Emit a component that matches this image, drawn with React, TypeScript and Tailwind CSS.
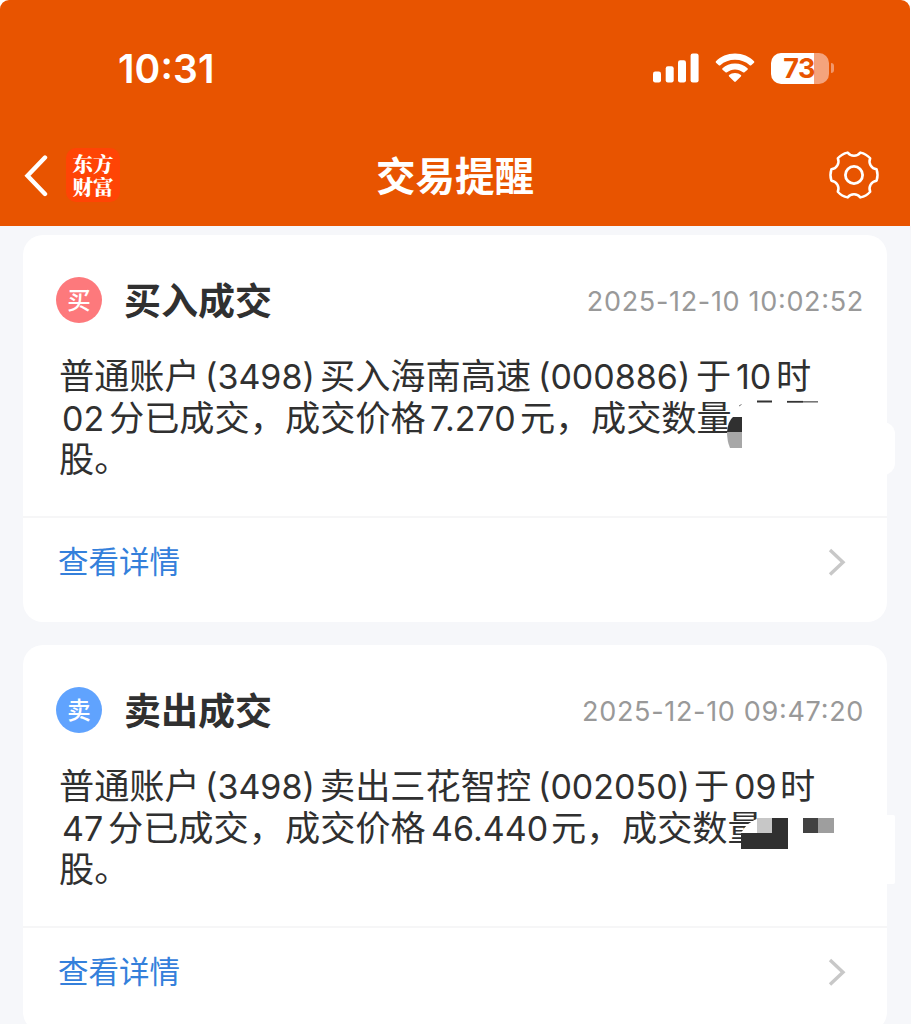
import React from 'react';

type Segment = { text: string; cls: string; latin?: boolean };

type Notice = {
  badge: string;
  badgeColor: string;
  title: string;
  time: string;
  lines: Segment[][];
  cover: React.ReactNode;
};

const CJK = "font-['Noto_Sans_CJK_SC',sans-serif]";
const LATIN = "font-['Inter',sans-serif]";

const notices: Notice[] = [
  {
    badge: '买',
    badgeColor: 'bg-[#fd797c]',
    title: '买入成交',
    time: '2025-12-10 10:02:52',
    lines: [
      [
        { text: '普通账户', cls: 'w-[146px]' },
        { text: '(3498)', cls: 'w-[115px]', latin: true },
        { text: '买入海南高速', cls: 'w-[218px]' },
        { text: '(000886)', cls: 'w-[158px]', latin: true },
        { text: '于', cls: 'w-[40px]' },
        { text: '10', cls: 'w-[40px]', latin: true },
        { text: '时', cls: '' },
      ],
      [
        { text: '02', cls: 'w-[47px] ml-[3px]', latin: true },
        { text: '分已成交，', cls: 'w-[176px]' },
        { text: '成交价格', cls: 'w-[145px]' },
        { text: '7.270', cls: 'w-[90px]', latin: true },
        { text: '元，', cls: 'w-[71px]' },
        { text: '成交数量', cls: '' },
      ],
      [{ text: '股。', cls: '' }],
    ],
    cover: (
      <>
        <div className="absolute left-[840px] top-[187px] h-[53px] w-[32px] rounded-r-[12px] bg-white" />
        <svg className="absolute left-[700px] top-[160px]" width="110" height="60">
          <path d="M4 54 Q4 24 18 8 L110 8 V60 H6Z" fill="#fff" />
          <path d="M10 22 H19 V37 H4 Q5 26 10 22Z" fill="#303030" />
          <path d="M4 37 H19 V53 H7 Q4 46 4 37Z" fill="#a7a7a7" />
          <path d="M16 11 L18.5 9.5" stroke="#777" strokeWidth="1" />
          <path d="M34 6.5 H49" stroke="#333" strokeWidth="2" />
          <path d="M64 6.8 H80" stroke="#333" strokeWidth="1.8" />
          <path d="M80 6.8 H95" stroke="#777" strokeWidth="1.6" />
        </svg>
      </>
    ),
  },
  {
    badge: '卖',
    badgeColor: 'bg-[#60a3fe]',
    title: '卖出成交',
    time: '2025-12-10 09:47:20',
    lines: [
      [
        { text: '普通账户', cls: 'w-[146px]' },
        { text: '(3498)', cls: 'w-[115px]', latin: true },
        { text: '卖出三花智控', cls: 'w-[218px]' },
        { text: '(002050)', cls: 'w-[156px]', latin: true },
        { text: '于', cls: 'w-[40px]' },
        { text: '09', cls: 'w-[46px]', latin: true },
        { text: '时', cls: '' },
      ],
      [
        { text: '47', cls: 'w-[46px] ml-[3px]', latin: true },
        { text: '分已成交，', cls: 'w-[177px]' },
        { text: '成交价格', cls: 'w-[146px]' },
        { text: '46.440', cls: 'w-[120px]', latin: true },
        { text: '元，', cls: 'w-[71px]' },
        { text: '成交数量', cls: '' },
      ],
      [{ text: '股。', cls: '' }],
    ],
    cover: (
      <>
        <div className="absolute left-[840px] top-[170px] h-[69px] w-[32px] rounded-r-[2px] bg-white" />
        <svg className="absolute left-[700px] top-[160px]" width="120" height="60">
          <path d="M18 45 V28 Q24 17 36 13 H112 V45Z" fill="#fff" />
          <path d="M34 13 H49 V28 H34Z" fill="#c7c7c7" />
          <path d="M49 13 H65 V44 H18 V28 H49Z" fill="#303030" />
          <path d="M80 13 H95 V28 H80Z" fill="#424242" />
          <path d="M95 13 H111 V28 H95Z" fill="#9e9e9e" />
        </svg>
      </>
    ),
  },
];

function gearPath(): string {
  const point = (deg: number) => {
    const a = (deg * Math.PI) / 180;
    return `${(26 + 23.3 * Math.cos(a)).toFixed(2)} ${(26 + 23.3 * Math.sin(a)).toFixed(2)}`;
  };
  let d = `M${point(-14)}`;
  for (let i = 0; i < 6; i++) {
    d += ` A18 18 0 0 1 ${point(i * 60 + 14)} A8 8 0 0 0 ${point(i * 60 + 46)}`;
  }
  return d + 'Z';
}

// Clock text with the colons lifted to the middle of the digits.
function ClockText({ value }: { value: string }) {
  return (
    <>
      {value.split(/(:)/).map((part, i) =>
        part === ':' ? (
          <span key={i} className="relative -top-[0.08em]">
            :
          </span>
        ) : (
          part
        ),
      )}
    </>
  );
}

function StatusBar() {
  return (
    <div className="flex h-[136px] items-center pl-[118px] pr-[76px] text-white">
      <span className={`${LATIN} text-[39px] font-semibold leading-none tracking-[0.1px]`}>
        <ClockText value="10:31" />
      </span>
      <svg className="ml-auto" width="46" height="30" fill="#fff">
        <rect x="0" y="18.5" width="8" height="11" rx="2.2" />
        <rect x="12.7" y="13.3" width="8" height="16.2" rx="2.2" />
        <rect x="25" y="7.3" width="8" height="22.2" rx="2.2" />
        <rect x="37.6" y="0.6" width="8" height="28.9" rx="2.2" />
      </svg>
      <svg className="ml-[16px]" width="40" height="30" viewBox="0 0 40 30" fill="#fff">
        <path d="M20 0.5 C27.5 0.5 34.5 3.5 39 8.2 C39.5 8.7 39.5 9.2 39 9.7 L36.2 12.2 C35.8 12.6 35.2 12.6 34.7 12.2 C30.8 8.7 25.6 6.8 20 6.8 C14.4 6.8 9.2 8.7 5.3 12.2 C4.8 12.6 4.2 12.6 3.8 12.2 L1 9.7 C0.5 9.2 0.5 8.7 1 8.2 C5.5 3.5 12.5 0.5 20 0.5Z" />
        <path d="M20 10.4 C24.9 10.4 29.3 12.2 32.5 15.2 C33 15.7 33 16.2 32.5 16.7 L29.5 19.3 C29.1 19.7 28.5 19.7 28 19.3 C25.7 17.4 23 16.4 20 16.4 C17 16.4 14.3 17.4 12 19.3 C11.5 19.7 10.9 19.7 10.5 19.3 L7.5 16.7 C7 16.2 7 15.7 7.5 15.2 C10.7 12.2 15.1 10.4 20 10.4Z" />
        <path d="M20 20 C22.4 20 24.3 20.8 25.9 22.1 C26.4 22.5 26.4 23 25.9 23.5 L20.8 28.6 C20.3 29.1 19.7 29.1 19.2 28.6 L14.1 23.5 C13.6 23 13.6 22.5 14.1 22.1 C15.7 20.8 17.6 20 20 20Z" />
      </svg>
      <div className="ml-[16px] flex items-center">
        <div className="flex h-[31px] w-[58px] items-center justify-center overflow-hidden rounded-[10px] bg-[linear-gradient(to_right,#fff_43px,#f4a37c_43px)]">
          <span className={`${LATIN} mr-[2px] text-[27px] font-bold leading-none tracking-[-0.7px] text-[#e85400]`}>73</span>
        </div>
        <div className="ml-[2px] h-[10px] w-[3px] rounded-r-full bg-[#f2976a]" />
      </div>
    </div>
  );
}

function NavBar() {
  return (
    <div className="flex h-[77px] items-center pl-[23px] pr-[30px] text-white">
      <svg width="27" height="44" fill="none" stroke="#fff" strokeWidth="4.4" strokeLinecap="round">
        <path d="M22 4.5 L4.5 22.8 L22 41" />
      </svg>
      <div className="ml-[16px] flex h-[54px] w-[54px] flex-col items-center justify-center rounded-[10px] bg-[#ff4405] font-['Noto_Serif_CJK_SC','Noto_Sans_CJK_SC',serif] text-[20.5px] font-black leading-[23px]">
        <span>东方</span>
        <span>财富</span>
      </div>
      <h1 className={`${CJK} -mt-[2px] ml-[256px] text-[39.5px] font-bold leading-none`}>交易提醒</h1>
      <svg className="ml-auto" width="52" height="52" fill="none" stroke="#fff" strokeLinejoin="round">
        <path d={gearPath()} strokeWidth="2.5" />
        <circle cx="26" cy="26" r="8.6" strokeWidth="2.8" />
      </svg>
    </div>
  );
}

function NoticeCard({ notice }: { notice: Notice }) {
  return (
    <section className="relative h-[387px] w-[864px] shrink-0 rounded-[20px] bg-white">
      <div className="flex h-[281px] flex-col">
        <div className="mt-[42px] flex h-[46px] items-center pl-[33px] pr-[23px]">
          <div className={`${CJK} ${notice.badgeColor} flex size-[46px] items-center justify-center rounded-full text-[23.5px] font-medium leading-none text-white`}>
            {notice.badge}
          </div>
          <h2 className={`${CJK} -mt-[2px] ml-[22px] text-[37px] font-bold leading-none text-[#303030]`}>{notice.title}</h2>
          <time className={`${LATIN} ml-auto mt-[2px] text-[27px] leading-none tracking-[0.68px] text-[#999]`}>
            <ClockText value={notice.time} />
          </time>
        </div>
        <div className="mt-[30px] pl-[36px] text-[#303030]">
          {notice.lines.map((line, i) => (
            <div key={i} className="flex h-[41.5px] items-baseline">
              {line.map((s) => (
                <span
                  key={s.text}
                  className={`${s.cls} ${s.latin ? `${LATIN} text-[34px]` : `${CJK} text-[35.2px]`} shrink-0 whitespace-nowrap leading-[41.5px]`}
                >
                  {s.text}
                </span>
              ))}
            </div>
          ))}
        </div>
      </div>
      <div className="flex h-[90px] items-center justify-between border-t-2 border-[#f6f6f7] pl-[35px] pr-[40px]">
        <a className={`${CJK} -mt-[3px] text-[30.5px] leading-none text-[#3480db]`}>查看详情</a>
        <svg width="20" height="30" fill="none" stroke="#c8c8c8" strokeWidth="3.4">
          <path d="M3 3 L16 15.2 L3 27.5" />
        </svg>
      </div>
      {notice.cover}
    </section>
  );
}

export default function App() {
  return (
    <div className="h-[1024px] w-[911px] overflow-hidden bg-white">
      <header className="h-[226px] w-[910px] rounded-t-[9px] bg-[#e85400]">
        <StatusBar />
        <NavBar />
      </header>
      <main className="flex h-[798px] flex-col gap-[23px] bg-[#f6f7fa] pl-[23px] pt-[9px]">
        {notices.map((n) => (
          <NoticeCard key={n.title} notice={n} />
        ))}
      </main>
    </div>
  );
}
